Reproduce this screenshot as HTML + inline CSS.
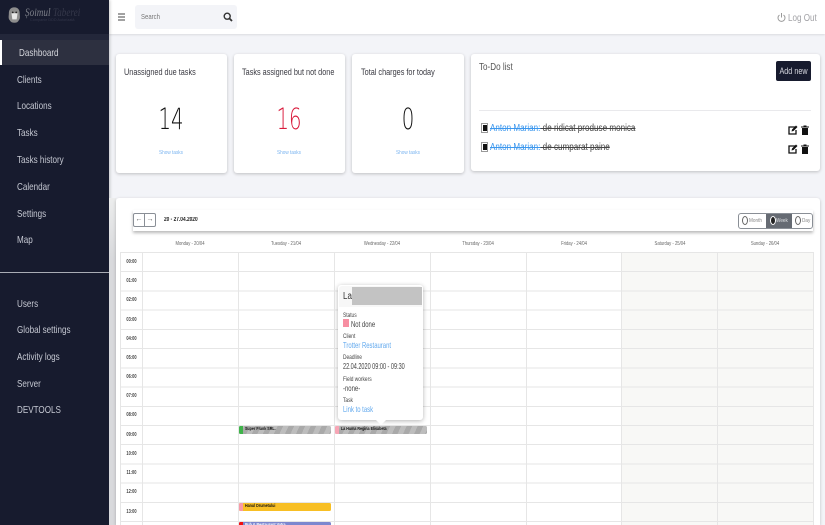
<!DOCTYPE html>
<html><head><meta charset="utf-8">
<style>
html,body{margin:0;padding:0;overflow:hidden;width:825px;height:525px}
body{position:relative;background:#f3f4f8;font-family:"Liberation Sans",sans-serif;color:#3f4047}
.a{position:absolute;white-space:nowrap}
.l{transform-origin:0 50%}
.side{left:0;top:0;width:109px;height:525px;background:#171b2e;box-shadow:1px 0 3px rgba(0,0,0,.2)}
.nav{left:17px;font-size:10.500px;line-height:12px;color:#c5c8d2;transform:scaleX(.77);transform-origin:0 50%}
.card{background:#fff;border-radius:3px;box-shadow:0 1px 3px rgba(0,0,0,.22)}
.ct{font-size:9px;line-height:10px;color:#3a3a42;transform:scaleX(.81);transform-origin:0 50%}
.num{font-family:"DejaVu Sans ExtraLight","DejaVu Sans","Liberation Sans",sans-serif;font-weight:200;font-size:29px;line-height:32px;width:108px;text-align:center;color:#111;transform:scaleX(.68)}
.show{font-size:5.500px;line-height:7px;color:#7ab4f0;width:108px;text-align:center;transform:scaleX(.85)}
.blue{color:#3b97ee}
.todo{font-size:10px;line-height:12px;color:#444;text-decoration:line-through;transform:scaleX(.81);transform-origin:0 50%}
.cb{width:5px;height:8px;border:1px solid #999;background:#fff}
.cb i{position:absolute;left:.5px;top:1px;width:4px;height:6px;background:#111}
.day{font-size:5.500px;line-height:7px;color:#666;text-align:center;width:96px;top:241px;transform:scaleX(.76)}
.hr{font-size:5.500px;line-height:7px;font-weight:bold;color:#444;left:121px;width:21px;text-align:center;transform:scaleX(.72)}
.ev{height:8.500px;border-radius:1.500px;font-size:4.800px;line-height:8.500px;font-weight:bold;color:#111;overflow:hidden}
.ev b{position:absolute;left:0;top:0;width:4px;height:100%}
.ev span{position:absolute;left:5.500px;top:0;transform:scaleX(.76);transform-origin:0 50%}
.stripe{background:repeating-linear-gradient(115deg,#bdbdbd 0 5px,#a9a9a9 5px 10px)}
.lb{font-size:6.500px;line-height:8px;color:#444;left:343px;transform:scaleX(.74);transform-origin:0 50%}
.val{font-size:8.500px;line-height:10px;color:#444;left:343px;transform:scaleX(.7);transform-origin:0 50%}
</style></head><body>

<div class="a card" style="left:109px;top:0;width:716px;height:34px;border-radius:0;box-shadow:0 1px 2px rgba(0,0,0,.1)"></div>

<div class="a side"></div>
<div class="a" style="left:0;top:34px;width:109px;height:6px;background:#23273a"></div>
<div class="a" style="left:0;top:40px;width:109px;height:25px;background:#2d3040"></div>
<div class="a" style="left:0;top:40px;width:2px;height:25px;background:#fff"></div>
<svg class="a" style="left:8px;top:6px" width="13" height="18" viewBox="0 0 15 18"><path d="M7.500 0C3 0 1 3 1 7c0 3-1 6 1 8 1 2 3 3 5.500 3s4-1 5-3c2-2 1-5 1-8 0-4-2-7-6.500-7z" fill="#8d8d8d"/><path d="M4 7h7l-1 7H5z" fill="#e8e8e8"/><circle cx="5.500" cy="6" r="1" fill="#222"/><circle cx="9.500" cy="6" r="1" fill="#222"/></svg>
<div class="a l" style="left:25px;top:7px;font-family:'Liberation Serif',serif;font-style:italic;font-size:11.500px;line-height:13px;color:#7c7f88;transform:scaleX(.8)">Șoimul <span style="color:#35384a">Taberei</span></div>
<div class="a l" style="left:30px;top:18px;font-size:3.800px;line-height:5px;color:#33364a">Companie DDD Autorizată</div>

<div class="a nav" style="left:19px;top:47px;color:#d5d6dc">Dashboard</div>
<div class="a nav" style="top:74px">Clients</div>
<div class="a nav" style="top:100px">Locations</div>
<div class="a nav" style="top:127px">Tasks</div>
<div class="a nav" style="top:154px">Tasks history</div>
<div class="a nav" style="top:181px">Calendar</div>
<div class="a nav" style="top:208px">Settings</div>
<div class="a nav" style="top:234px">Map</div>
<div class="a" style="left:0;top:272px;width:109px;height:1px;background:#a9acb5"></div>
<div class="a nav" style="top:298px">Users</div>
<div class="a nav" style="top:324px">Global settings</div>
<div class="a nav" style="top:351px">Activity logs</div>
<div class="a nav" style="top:378px">Server</div>
<div class="a nav" style="top:404px">DEVTOOLS</div>

<svg class="a" style="left:118px;top:13px" width="8" height="8"><path d="M0 1h7M0 4h7M0 7h7" stroke="#444" stroke-width="1"/></svg>
<div class="a" style="left:135px;top:5px;width:102px;height:24px;background:#f3f4f8;border-radius:3px"></div>
<div class="a l" style="left:141px;top:12px;font-size:7.500px;line-height:10px;color:#777;transform:scaleX(.8)">Search</div>
<svg class="a" style="left:223px;top:12px" width="10" height="10" viewBox="0 0 10 10"><circle cx="4.200" cy="4.200" r="3" fill="none" stroke="#333" stroke-width="1.400"/><path d="M6.500 6.500L9 9" stroke="#333" stroke-width="1.800"/></svg>

<svg class="a" style="left:777px;top:12px" width="9" height="11" viewBox="0 0 9 11"><path d="M2.500 3A3.500 3.500 0 1 0 6.500 3" fill="none" stroke="#999" stroke-width="1"/><path d="M4.500 1v4.500" stroke="#999" stroke-width="1"/></svg>
<div class="a l" style="left:788px;top:12px;font-size:10.500px;line-height:12px;color:#a2a2a6;transform:scaleX(.77)">Log Out</div>

<div class="a card" style="left:116px;top:54px;width:111px;height:119px"></div>
<div class="a ct" style="left:124px;top:67px">Unassigned due tasks</div>
<div class="a num" style="left:117px;top:103px">14</div>
<div class="a show" style="left:117px;top:150px">Show tasks</div>

<div class="a card" style="left:234px;top:54px;width:111px;height:119px"></div>
<div class="a ct" style="left:242px;top:67px">Tasks assigned but not done</div>
<div class="a num" style="left:235px;top:103px;color:#d91b3c">16</div>
<div class="a show" style="left:235px;top:150px">Show tasks</div>

<div class="a card" style="left:352px;top:54px;width:112px;height:119px"></div>
<div class="a ct" style="left:361px;top:67px">Total charges for today</div>
<div class="a num" style="left:354px;top:103px">0</div>
<div class="a show" style="left:354px;top:150px">Show tasks</div>

<div class="a card" style="left:471px;top:54px;width:349px;height:117px"></div>
<div class="a l" style="left:479px;top:61px;font-size:10.500px;line-height:12px;color:#555;transform:scaleX(.77)">To-Do list</div>
<div class="a" style="left:776px;top:61px;width:35px;height:20px;background:#171b2e;border-radius:2px;color:#d8d9e0;font-size:9px;line-height:20px;text-align:center"><span style="display:inline-block;transform:scaleX(.8)">Add new</span></div>
<div class="a" style="left:479px;top:110px;width:332px;height:1px;background:#e9e9ec"></div>

<div class="a cb" style="left:481px;top:123px"><i></i></div>
<div class="a todo" style="left:490px;top:123px"><span class="blue" style="text-decoration:line-through">Anton Marian:</span> de ridicat produse monica</div>
<div class="a cb" style="left:481px;top:142px"><i></i></div>
<div class="a todo" style="left:490px;top:142px"><span class="blue" style="text-decoration:line-through">Anton Marian:</span> de cumparat paine</div>

<svg class="a" style="left:788px;top:125px" width="10" height="10" viewBox="0 0 10 10"><path d="M7 2H1v7h7V5" fill="none" stroke="#111" stroke-width="1.300"/><path d="M3.500 6.500L4 4.500 8 .5l1.500 1.500-4 4z" fill="#111"/></svg>
<svg class="a" style="left:801px;top:125px" width="8" height="10" viewBox="0 0 8 10"><path d="M0 1.500h8v1H0zM2.500.5h3v1h-3zM1 3h6v7H1z" fill="#111"/></svg>
<svg class="a" style="left:788px;top:144px" width="10" height="10" viewBox="0 0 10 10"><path d="M7 2H1v7h7V5" fill="none" stroke="#111" stroke-width="1.300"/><path d="M3.500 6.500L4 4.500 8 .5l1.500 1.500-4 4z" fill="#111"/></svg>
<svg class="a" style="left:801px;top:144px" width="8" height="10" viewBox="0 0 8 10"><path d="M0 1.500h8v1H0zM2.500.5h3v1h-3zM1 3h6v7H1z" fill="#111"/></svg>

<div class="a" style="left:109px;top:198px;width:7px;height:327px;background:linear-gradient(#eceded,#d8d9dc 60px)"></div>
<div class="a card" style="left:116px;top:198px;width:704px;height:327px;border-radius:3px 3px 0 0"></div>

<div class="a" style="left:133px;top:210px;width:680px;height:21px;background:#fff;box-shadow:0 2px 3px rgba(0,0,0,.28)"></div>
<div class="a" style="left:133px;top:213px;width:23px;height:14px;border:1px solid #8a8f96;border-radius:2px;box-sizing:border-box;background:#fff"></div>
<div class="a" style="left:144px;top:213px;width:1px;height:14px;background:#8a8f96"></div>
<div class="a" style="left:134px;top:214px;width:10px;text-align:center;font-size:7px;line-height:11px;color:#555">←</div>
<div class="a" style="left:145px;top:214px;width:10px;text-align:center;font-size:7px;line-height:11px;color:#555">→</div>
<div class="a l" style="left:164px;top:216px;font-size:6px;line-height:8px;font-weight:bold;color:#222;transform:scaleX(.8)">20 - 27.04.2020</div>

<div class="a" style="left:738px;top:213px;width:75px;height:16px;border:1px solid #8a8f96;border-radius:3px;box-sizing:border-box;background:#fff"></div>
<div class="a" style="left:766px;top:214px;width:26px;height:14px;background:#666b73"></div>
<div class="a" style="left:742px;top:216px;width:4px;height:7px;border:1px solid #666;border-radius:50%"></div>
<div class="a l" style="left:749px;top:218px;font-size:5.500px;line-height:7px;color:#888;transform:scaleX(.85)">Month</div>
<div class="a" style="left:770px;top:216px;width:4px;height:7px;border:1px solid #fff;border-radius:50%;background:#222"></div>
<div class="a l" style="left:776px;top:218px;font-size:5.500px;line-height:7px;color:#dfe1e4;transform:scaleX(.85)">Week</div>
<div class="a" style="left:795px;top:216px;width:4px;height:7px;border:1px solid #666;border-radius:50%"></div>
<div class="a l" style="left:802px;top:218px;font-size:5.500px;line-height:7px;color:#888;transform:scaleX(.85)">Day</div>

<div class="a day" style="left:142px">Monday - 20/04</div>
<div class="a day" style="left:238px">Tuesday - 21/04</div>
<div class="a day" style="left:334px">Wednesday - 22/04</div>
<div class="a day" style="left:430px">Thursday - 23/04</div>
<div class="a day" style="left:526px">Friday - 24/04</div>
<div class="a day" style="left:622px">Saturday - 25/04</div>
<div class="a day" style="left:717px">Sunday - 26/04</div>

<svg class="a" style="left:0;top:0" width="825" height="525">
<rect x="622" y="253" width="192" height="272" fill="#f8f8f6"/>
<g stroke="#e6e6e6" stroke-width="1" fill="none">
<path d="M120 252.500H814M120 271.500H814M120 291H814M120 310H814M120 329.500H814M120 348.500H814M120 368H814M120 387H814M120 406.500H814M120 425.500H814M120 444.500H814M120 464H814M120 483H814M120 502.500H814M120 521.500H814"/>
<path d="M120.500 252V525M142.500 252V525M238.500 252V525M334.500 252V525M430.500 252V525M526.500 252V525M621.500 252V525M717.500 252V525M813.500 252V525"/>
</g>
</svg>

<div class="a hr" style="top:259px">00:00</div>
<div class="a hr" style="top:278px">01:00</div>
<div class="a hr" style="top:297px">02:00</div>
<div class="a hr" style="top:317px">03:00</div>
<div class="a hr" style="top:336px">04:00</div>
<div class="a hr" style="top:355px">05:00</div>
<div class="a hr" style="top:374px">06:00</div>
<div class="a hr" style="top:393px">07:00</div>
<div class="a hr" style="top:412px">08:00</div>
<div class="a hr" style="top:432px">09:00</div>
<div class="a hr" style="top:451px">10:00</div>
<div class="a hr" style="top:470px">11:00</div>
<div class="a hr" style="top:489px">12:00</div>
<div class="a hr" style="top:509px">13:00</div>

<div class="a ev stripe" style="left:239px;top:425.700px;width:92px"><b style="background:#3fb34a"></b><span>Super Frank SRL.</span></div>
<div class="a ev stripe" style="left:335px;top:425.700px;width:92px"><b style="background:#f7a5b5"></b><span>La Huma Regina Elisabeta</span></div>
<div class="a ev" style="left:239px;top:502.500px;width:92px;background:#f8bf24"><b style="background:#f79aa8"></b><span>Hanul Drumetului</span></div>
<div class="a ev" style="left:239px;top:522px;width:92px;background:#7c87cf;color:#fff"><b style="background:#f01010"></b><span>Pub &amp; Restaurant Vatra</span></div>

<div class="a" style="left:338px;top:285px;width:85px;height:135px;background:#fff;border-radius:3px;box-shadow:0 1px 5px rgba(0,0,0,.3)"></div>
<div class="a" style="left:339px;top:286px;width:83px;height:21px;background:#f7f7f7;border-radius:3px 3px 0 0"></div>
<div class="a l" style="left:343px;top:291px;font-size:10px;line-height:12px;color:#333;transform:scaleX(.8)">La</div>
<div class="a" style="left:352px;top:287px;width:70px;height:18px;background:#c3c3c3"></div>
<svg class="a" style="left:375px;top:419px" width="12" height="7"><path d="M0 0L6 6 12 0z" fill="#fff"/></svg>

<div class="a lb" style="top:312px">Status</div>
<div class="a" style="left:343px;top:319px;width:6px;height:8px;background:#f78fa2"></div>
<div class="a val" style="left:351px;top:319px">Not done</div>
<div class="a lb" style="top:333px">Client</div>
<div class="a val" style="top:340px;color:#62a9ee">Trotter Restaurant</div>
<div class="a lb" style="top:354px">Deadline</div>
<div class="a val" style="top:361px;transform:scaleX(.65)">22.04.2020 09:00 - 09:30</div>
<div class="a lb" style="top:376px">Field workers</div>
<div class="a val" style="top:383px">-none-</div>
<div class="a lb" style="top:397px">Task</div>
<div class="a val" style="top:404px;color:#62a9ee">Link to task</div>
</body></html>
